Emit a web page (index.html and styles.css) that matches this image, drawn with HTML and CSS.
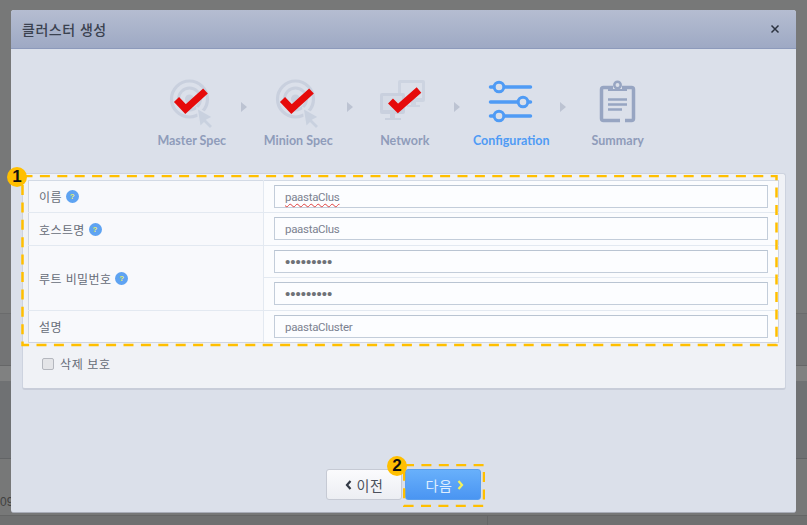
FILE: index.html
```html
<!DOCTYPE html>
<html lang="ko">
<head>
    <meta charset="UTF-8">
    <title>클러스터 생성</title>
    <link rel="stylesheet" href="styles.css">
</head>
<body>
    <div class="backdrop">
        <div class="band b1"></div>
        <div class="band b2"></div>
        <div class="band b3"></div>
        <div class="band b4"></div>
        <div class="vline"></div>
        <span class="peek">09</span>
    </div>

    <div class="modal">
        <div class="modal-header">
            <span class="modal-title">클러스터 생성</span>
            <svg class="close" width="10" height="10" viewBox="0 0 10 10"><path d="M1.5 1.5l7 7M8.5 1.5l-7 7" stroke="#2c3340" stroke-width="1.5" fill="none"/></svg>
        </div>

        <div class="steps">
            <div class="step">
                <svg class="step-icon" width="50" height="50" viewBox="0 0 50 50">
                    <circle cx="22.5" cy="21" r="18" fill="none" stroke="#c9d0de" stroke-width="3.2"/>
                    <circle cx="22.5" cy="21" r="11" fill="none" stroke="#c9d0de" stroke-width="3"/>
                    <circle cx="22.5" cy="21" r="4.5" fill="#c9d0de"/>
                    <path d="M30 30l16 9-6 3 6 6-3 3-6-6-4 4z" fill="#c9d1df" stroke="#dbe0ea" stroke-width="1.5"/>
                    <path d="M9.5 21.5l9 9.5 20-18" fill="none" stroke="#e60b0b" stroke-width="7"/>
                </svg>
                <span class="step-label">Master Spec</span>
            </div>
            <div class="arrow"></div>
            <div class="step">
                <svg class="step-icon" width="50" height="50" viewBox="0 0 50 50">
                    <circle cx="22.5" cy="21" r="18" fill="none" stroke="#c9d0de" stroke-width="3.2"/>
                    <circle cx="22.5" cy="21" r="11" fill="none" stroke="#c9d0de" stroke-width="3"/>
                    <circle cx="22.5" cy="21" r="4.5" fill="#c9d0de"/>
                    <path d="M30 30l16 9-6 3 6 6-3 3-6-6-4 4z" fill="#c9d1df" stroke="#dbe0ea" stroke-width="1.5"/>
                    <path d="M9.5 21.5l9 9.5 20-18" fill="none" stroke="#e60b0b" stroke-width="7"/>
                </svg>
                <span class="step-label">Minion Spec</span>
            </div>
            <div class="arrow"></div>
            <div class="step">
                <svg class="step-icon" width="50" height="50" viewBox="0 0 50 50">
                    <rect x="18" y="2" width="27" height="22" rx="2" fill="#cdd4e1"/>
                    <rect x="21" y="5" width="21" height="15" fill="#dbe0ea"/>
                    <rect x="31" y="24" width="5" height="3" fill="#cdd4e1"/>
                    <rect x="27" y="27" width="13" height="2" fill="#cdd4e1"/>
                    <rect x="0" y="15" width="25" height="21" rx="2" fill="#c9d0de"/>
                    <rect x="3" y="18" width="19" height="14" fill="#d5dbe6"/>
                    <rect x="10" y="36" width="5" height="4" fill="#c9d0de"/>
                    <rect x="5" y="40" width="16" height="2" fill="#c9d0de"/>
                    <path d="M10.5 23l7.5 7.5 21-18.5" fill="none" stroke="#e60b0b" stroke-width="7"/>
                </svg>
                <span class="step-label">Network</span>
            </div>
            <div class="arrow"></div>
            <div class="step active">
                <svg class="step-icon" width="50" height="50" viewBox="0 0 50 50">
                    <g stroke="#4f9bf5" stroke-linecap="round" fill="#dbe0ea">
                        <path d="M4.5 9h40M4.5 24h40M4.5 38h40" stroke-width="3.5"/>
                        <circle cx="13" cy="9" r="4.8" stroke-width="3"/>
                        <circle cx="37" cy="24" r="4.8" stroke-width="3"/>
                        <circle cx="13" cy="38" r="4.8" stroke-width="3"/>
                    </g>
                </svg>
                <span class="step-label">Configuration</span>
            </div>
            <div class="arrow"></div>
            <div class="step">
                <svg class="step-icon" width="50" height="50" viewBox="0 0 50 50">
                    <g fill="none" stroke="#97a5c2" stroke-width="3.5">
                        <path d="M20 9.5H10.5a2 2 0 0 0-2 2v29a2 2 0 0 0 2 2H27M32 42.5h6.5a2 2 0 0 0 2-2v-29a2 2 0 0 0-2-2H29"/>
                        <circle cx="24.5" cy="7" r="3.2" fill="#dbe0ea" stroke-width="2.5"/>
                        <path d="M15 12h19" stroke-width="2"/>
                        <path d="M15 21.5h19M15 26.5h19M15 31.5h14" stroke-width="2.5"/>
                    </g>
                </svg>
                <span class="step-label">Summary</span>
            </div>
        </div>

        <div class="panel">
            <table class="form-table">
                <tr>
                    <th><span class="th-inner">이름 <i class="help">?</i></span></th>
                    <td><div class="input spell">paastaClus</div></td>
                </tr>
                <tr>
                    <th><span class="th-inner">호스트명 <i class="help">?</i></span></th>
                    <td><div class="input">paastaClus</div></td>
                </tr>
                <tr>
                    <th rowspan="2"><span class="th-inner">루트 비밀번호 <i class="help">?</i></span></th>
                    <td><div class="input dots">•••••••••</div></td>
                </tr>
                <tr>
                    <td><div class="input dots">•••••••••</div></td>
                </tr>
                <tr>
                    <th><span class="th-inner">설명</span></th>
                    <td><div class="input">paastaCluster</div></td>
                </tr>
            </table>
            <label class="protect"><span class="checkbox"></span>삭제 보호</label>
        </div>

        <div class="modal-footer">
            <button class="btn btn-prev"><svg width="7" height="10" viewBox="0 0 7 10"><path d="M5.5 1L2 5l3.5 4" fill="none" stroke="#333a46" stroke-width="2.2"/></svg>이전</button>
            <button class="btn btn-next">다음<svg width="7" height="10" viewBox="0 0 7 10"><path d="M1.5 1L5 5 1.5 9" fill="none" stroke="#f4f25a" stroke-width="2.2"/></svg></button>
        </div>

        <svg class="callout callout-form" width="757" height="172"><rect x="1.5" y="1" width="754" height="169"/></svg>
        <span class="badge badge-form">1</span>
        <svg class="callout callout-next" width="82" height="43"><rect x="1" y="1" width="80" height="41"/></svg>
        <span class="badge badge-next">2</span>
    </div>
</body>
</html>
```

FILE: styles.css
```css
html, body {
    margin: 0;
    padding: 0;
    height: 100%;
}

body {
    position: relative;
    width: 807px;
    height: 525px;
    overflow: hidden;
    background-color: #777878;
    font-family: "Noto Sans CJK KR", "Noto Sans", sans-serif;
}

/* page behind the dimmed overlay */
.band {
    position: absolute;
    left: 0;
    right: 0;
}

.b1 {
    top: 313px;
    height: 52px;
    background-color: #737475;
    border-top: 1px solid #6a6b6c;
}

.b2 {
    top: 365px;
    height: 15px;
    background-color: #808181;
    border-top: 1px solid #666768;
    border-bottom: 1px solid #6a6b6c;
}

.b3 {
    top: 381px;
    height: 77px;
    background-color: #6f7173;
    border-bottom: 1px solid #626466;
}

.b4 {
    top: 515px;
    height: 10px;
    background-color: #6f7070;
    border-top: 1px solid #656666;
}

.vline {
    position: absolute;
    left: 487px;
    top: 515px;
    width: 1px;
    height: 10px;
    background-color: #656666;
}

.peek {
    position: absolute;
    left: 0;
    top: 495px;
    font-family: "Liberation Sans", sans-serif;
    font-size: 12px;
    line-height: 15px;
    color: #414141;
}

.modal {
    position: absolute;
    left: 11px;
    top: 10px;
    width: 785px;
    height: 503px;
    box-sizing: border-box;
    display: flex;
    flex-direction: column;
    background-color: #dbe0ea;
    border-radius: 3px;
    border-bottom: 1px solid #a9adb8;
}

.modal-header {
    height: 39px;
    flex: none;
    box-sizing: border-box;
    padding: 0 16px 0 11px;
    display: flex;
    align-items: center;
    justify-content: space-between;
    background: linear-gradient(#b5bdd1, #9ea9c4);
    border-bottom: 1px solid #8d9abb;
    border-radius: 3px 3px 0 0;
}

.modal-title {
    font-size: 14px;
    font-weight: 500;
    letter-spacing: 0.5px;
    color: #3b4250;
}

.steps {
    height: 124px;
    flex: none;
    box-sizing: border-box;
    padding: 29px 0 0 143px;
    display: flex;
    align-items: flex-start;
}

.step {
    flex: none;
    width: 75.5px;
    min-width: 0;
    display: flex;
    flex-direction: column;
    align-items: center;
}

.step-icon {
    display: block;
    flex: none;
}

.step-label {
    margin-top: 4px;
    font-family: "Lato", sans-serif;
    font-size: 12.5px;
    font-weight: 700;
    line-height: 18px;
    white-space: nowrap;
    color: #8f9cba;
}

.step.active .step-label {
    color: #4f9bf5;
}

.arrow {
    flex: none;
    width: 0;
    height: 0;
    margin: 24px 14px 0 11px;
    border-left: 6px solid #bcc3d2;
    border-top: 5px solid transparent;
    border-bottom: 5px solid transparent;
}

.panel {
    margin: 0 10px 0 11px;
    height: 217px;
    flex: none;
    box-sizing: border-box;
    padding: 6px 6px 0 5px;
    background-color: #f0f2f6;
    border: 1px solid #cdd3df;
    border-bottom: 2px solid #c8cdd9;
    border-radius: 3px;
}

.form-table {
    width: 751px;
    border-collapse: collapse;
    background-color: #fbfcfe;
}

.form-table th,
.form-table td {
    border: 1px solid #e3e9f1;
    padding: 0;
    height: 32px;
    box-sizing: border-box;
}

.form-table tr:nth-child(even) th,
.form-table tr:nth-child(even) td {
    height: 33px;
}

.form-table tr:nth-child(even) .input {
    margin-bottom: 1px;
}

.form-table tr:first-child th,
.form-table tr:first-child td {
    border-top-color: #d3dae5;
}

.form-table tr:last-child th,
.form-table tr:last-child td {
    border-bottom-color: #cfd6e2;
}

.form-table th:first-child {
    border-left-color: #cfd6e2;
}

.form-table td:last-child {
    border-right-color: #cfd6e2;
}

.form-table th {
    width: 235px;
    padding-left: 10px;
    text-align: left;
    font-size: 12px;
    font-weight: 400;
    color: #666c78;
    background-color: #f8f9fc;
}

.th-inner {
    display: inline-flex;
    align-items: center;
    gap: 4px;
    letter-spacing: 0.4px;
}

.help {
    display: inline-block;
    width: 13px;
    height: 13px;
    border-radius: 50%;
    background-color: #5ea3f2;
    color: #e6ef6a;
    font-family: "Liberation Sans", sans-serif;
    font-size: 8px;
    font-weight: 700;
    font-style: normal;
    line-height: 13px;
    text-align: center;
}

.form-table td {
    padding: 0 10px 0 10px;
}

.input {
    height: 23px;
    box-sizing: border-box;
    padding-left: 10px;
    border: 1px solid #c3cdda;
    border-top-color: #b9c4d2;
    background-color: #fcfdff;
    font-family: "Roboto", sans-serif;
    font-size: 11.5px;
    letter-spacing: -0.3px;
    line-height: 22px;
    color: #7b8190;
}

.spell {
    text-decoration: underline wavy #e0413f 1px;
    text-underline-offset: 2px;
}

.dots {
    font-family: "Liberation Sans", sans-serif;
    font-size: 15px;
    letter-spacing: 0;
    color: #6f7278;
}

.protect {
    display: flex;
    align-items: center;
    margin: 12px 0 0 14px;
    font-size: 12px;
    letter-spacing: 0.6px;
    color: #666c78;
}

.checkbox {
    width: 10px;
    height: 10px;
    margin-right: 6px;
    background-color: #e4e5e8;
    border: 1px solid #b4b7be;
    border-radius: 2px;
}

.modal-footer {
    flex: none;
    display: flex;
    justify-content: center;
    gap: 3px;
    padding-top: 79px;
}

.btn {
    width: 76px;
    height: 31px;
    padding: 0;
    display: flex;
    align-items: center;
    justify-content: center;
    gap: 5px;
    font-family: "Noto Sans CJK KR", sans-serif;
    font-size: 14px;
    letter-spacing: 0.5px;
    border-radius: 3px;
}

.btn-prev {
    background: linear-gradient(#fbfbfd, #eceef3);
    border: 1px solid #c6cad4;
    color: #4a505c;
}

.btn-next {
    padding-left: 4px;
    background: linear-gradient(#68b0fb, #4a95f2);
    border: 1px solid #5a9fee;
    color: #dfeeff;
}

.callout {
    position: absolute;
}

.callout rect {
    fill: none;
    stroke: #ffbf00;
    stroke-width: 2.5;
    stroke-dasharray: 10 7.4;
}

.callout-form {
    left: 10px;
    top: 165px;
}

.callout-next {
    left: 392px;
    top: 454px;
}

.badge {
    position: absolute;
    width: 20px;
    height: 20px;
    border-radius: 50%;
    background-color: #ffbf00;
    font-family: "Liberation Sans", sans-serif;
    font-size: 17px;
    font-weight: 700;
    line-height: 20px;
    text-align: center;
    color: #111;
}

.badge-form {
    left: -4px;
    top: 157px;
}

.badge-next {
    left: 376px;
    top: 446px;
}
```
